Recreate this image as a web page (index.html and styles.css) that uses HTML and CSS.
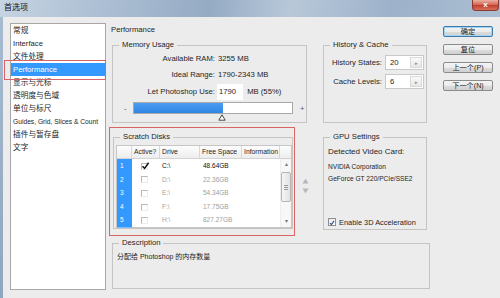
FILE: index.html
```html
<!DOCTYPE html>
<html lang="zh">
<head>
    <meta charset="UTF-8">
    <meta name="viewport" content="width=device-width, initial-scale=1.0">
    <title>首选项</title>
    <link rel="stylesheet" href="styles.css">
</head>
<body>
    <div class="window">
        <div class="titlebar">
            <span class="title">首选项</span>
            <div class="close-btn">x</div>
        </div>

        <div class="client">
            <!-- Left category list -->
            <ul class="nav">
                <li>常规</li>
                <li>Interface</li>
                <li>文件处理</li>
                <li class="active">Performance</li>
                <li>显示与光标</li>
                <li>透明度与色域</li>
                <li>单位与标尺</li>
                <li class="small">Guides, Grid, Slices &amp; Count</li>
                <li>插件与暂存盘</li>
                <li>文字</li>
            </ul>

            <div class="panel">
                <h1>Performance</h1>

                <div class="panel-row top-row">
                    <fieldset class="group memory">
                        <legend>Memory Usage</legend>
                        <div class="mem-grid">
                            <span class="label">Available RAM:</span><span>3255 MB</span>
                            <span class="label">Ideal Range:</span><span>1790-2343 MB</span>
                            <span class="label">Let Photoshop Use:</span>
                            <span class="use"><span class="field">1790</span> MB (55%)</span>
                        </div>
                        <div class="slider">
                            <span class="minus">-</span>
                            <div class="track">
                                <div class="fill" style="width: 89px"></div>
                                <svg class="thumb" width="8" height="7" viewBox="0 0 8 7"><polygon points="4,0.8 7.2,6.2 0.8,6.2" fill="#fff" stroke="#3b4a3b" stroke-width="1"/></svg>
                            </div>
                            <span class="plus">+</span>
                        </div>
                    </fieldset>

                    <fieldset class="group history">
                        <legend>History &amp; Cache</legend>
                        <div class="hist-grid">
                            <span class="label">History States:</span>
                            <div class="spin"><span>20</span><span class="spin-btn">&#9656;</span></div>
                            <span class="label">Cache Levels:</span>
                            <div class="spin"><span>6</span><span class="spin-btn">&#9656;</span></div>
                        </div>
                    </fieldset>
                </div>

                <div class="panel-row bottom-row">
                    <div class="callout">
                        <fieldset class="group scratch">
                            <legend>Scratch Disks</legend>
                            <div class="disk-table">
                                <div class="disk-head">
                                    <span></span>
                                    <span>Active?</span>
                                    <span>Drive</span>
                                    <span>Free Space</span>
                                    <span>Information</span>
                                    <span class="blank"></span>
                                </div>
                                <div class="disk-body">
                                    <div class="disk-rows">
                                        <div class="disk-row on">
                                            <span class="num">1</span>
                                            <span class="act"><span class="box"><svg width="9" height="8" viewBox="0 0 9 8"><path d="M1.5 4.2 L3.6 6.4 L7.6 0.8" fill="none" stroke="#111" stroke-width="1.5"/></svg></span></span>
                                            <span class="drv">C:\</span>
                                            <span class="free">48.64GB</span>
                                            <span></span>
                                        </div>
                                        <div class="disk-row">
                                            <span class="num">2</span>
                                            <span class="act"><span class="box"></span></span>
                                            <span class="drv">D:\</span>
                                            <span class="free">22.36GB</span>
                                            <span></span>
                                        </div>
                                        <div class="disk-row">
                                            <span class="num">3</span>
                                            <span class="act"><span class="box"></span></span>
                                            <span class="drv">E:\</span>
                                            <span class="free">54.34GB</span>
                                            <span></span>
                                        </div>
                                        <div class="disk-row">
                                            <span class="num">4</span>
                                            <span class="act"><span class="box"></span></span>
                                            <span class="drv">F:\</span>
                                            <span class="free">17.75GB</span>
                                            <span></span>
                                        </div>
                                        <div class="disk-row">
                                            <span class="num">5</span>
                                            <span class="act"><span class="box"></span></span>
                                            <span class="drv">H:\</span>
                                            <span class="free">827.27GB</span>
                                            <span></span>
                                        </div>
                                    </div>
                                    <div class="scrollbar">
                                        <span class="arrow">&#9652;</span>
                                        <div class="sb-thumb"><span class="grip"></span></div>
                                        <span class="arrow down">&#9662;</span>
                                    </div>
                                </div>
                            </div>
                        </fieldset>
                    </div>

                    <div class="order-arrows">
                        <svg width="7" height="6" viewBox="0 0 7 6"><polygon points="3.5,0.5 6.5,5.5 0.5,5.5" fill="#b2b8be"/></svg>
                        <svg width="7" height="6" viewBox="0 0 7 6"><polygon points="0.5,0.5 6.5,0.5 3.5,5.5" fill="#b2b8be"/></svg>
                    </div>

                    <fieldset class="group gpu">
                        <legend>GPU Settings</legend>
                        <div class="gpu-body">
                            <div class="gpu-title">Detected Video Card:</div>
                            <div class="gpu-card">NVIDIA Corporation</div>
                            <div class="gpu-card">GeForce GT 220/PCIe/SSE2</div>
                            <label class="check-row">
                                <span class="check"><svg width="8" height="8" viewBox="0 0 8 8"><path d="M1.3 4.2 L3.2 6.2 L6.8 1.2" fill="none" stroke="#2b4f9e" stroke-width="1.4"/></svg></span>
                                Enable 3D Acceleration
                            </label>
                        </div>
                    </fieldset>
                </div>

                <fieldset class="group description">
                    <legend>Description</legend>
                    <p>分配给 Photoshop 的内存数量</p>
                </fieldset>
            </div>

            <div class="buttons">
                <button class="btn default">确定</button>
                <button class="btn">复位</button>
                <button class="btn">上一个(P)</button>
                <button class="btn">下一个(N)</button>
            </div>
        </div>

        <!-- Red annotation around the selected category -->
        <div class="mark nav-mark"></div>
    </div>
</body>
</html>
```

FILE: styles.css
```css
* {
    margin: 0;
    padding: 0;
    box-sizing: border-box;
}

body {
    width: 500px;
    height: 298px;
    overflow: hidden;
    font-family: "Liberation Sans", "Noto Sans CJK SC", sans-serif;
    font-size: 7.7px;
    color: #1e1e1e;
}

.window {
    position: relative;
    width: 500px;
    height: 298px;
    display: flex;
    flex-direction: column;
    background: linear-gradient(180deg, #a9bcd1, #8fa6bf);
}

/* Title bar */
.titlebar {
    position: relative;
    height: 17px;
    flex-shrink: 0;
    background: linear-gradient(100deg, #c6d4e3 0%, #afc1d5 18%, #95abc4 42%, #b8c8d9 58%, #9db2ca 78%, #aabdd2 100%);
}

.title {
    display: block;
    padding-left: 4px;
    line-height: 16px;
    font-size: 8px;
    color: #111;
}

.close-btn {
    position: absolute;
    top: 0;
    right: 1px;
    width: 27px;
    height: 11px;
    border: 1px solid #8a3a30;
    border-top: 0;
    border-radius: 0 0 4px 4px;
    background: linear-gradient(180deg, #eab0a4 0%, #d66a58 45%, #c2412f 55%, #d8705c 100%);
    color: #fff;
    font-weight: bold;
    font-size: 8px;
    line-height: 10px;
    text-align: center;
}

/* Client area */
.client {
    flex: 1;
    margin-left: 3px;
    background-color: #ececec;
    display: flex;
    align-items: flex-start;
    padding: 6px 0 0 7px;
}

.nav {
    list-style: none;
    width: 96px;
    height: 267px;
    flex-shrink: 0;
    background-color: #fff;
    border: 1px solid #a7a7a7;
}

.nav li {
    height: 13px;
    line-height: 13px;
    padding-left: 2px;
    white-space: nowrap;
}

.nav li.active {
    background-color: #3399ff;
    color: #fff;
}

.nav li.small {
    font-size: 6.7px;
}

.panel {
    width: 321px;
    margin-left: 3px;
    flex-shrink: 0;
}

.panel h1 {
    font-size: 7.7px;
    font-weight: normal;
    line-height: 14px;
    margin-left: 2px;
}

.panel-row {
    display: flex;
    align-items: flex-start;
}

.top-row {
    margin-top: 3px;
}

.bottom-row {
    margin-top: 4px;
}

/* Group boxes */
.group {
    border: 1px solid #c4c4c4;
    min-width: 0;
}

.group legend {
    margin-left: 6px;
    padding: 0 3px;
    line-height: 10px;
}

.memory {
    margin-left: 3px;
    width: 195px;
    height: 83px;
}

.mem-grid {
    display: grid;
    grid-template-columns: 102px auto;
    grid-template-rows: 16px 17px 17px;
    column-gap: 3px;
    align-items: center;
}

.label {
    text-align: right;
    white-space: nowrap;
}

.field {
    display: inline-block;
    width: 26px;
    height: 16px;
    line-height: 16px;
    margin-left: -1px;
    margin-right: 2px;
    padding-left: 2px;
    background-color: #fff;
}

.slider {
    display: flex;
    align-items: center;
    height: 14px;
    margin-top: 1px;
    padding-left: 11px;
}

.minus,
.plus {
    width: 5px;
    color: #555;
}

.track {
    position: relative;
    width: 160px;
    height: 12px;
    margin-left: 4px;
    background-color: #fff;
    border: 1px solid #a9a9a9;
}

.fill {
    height: 100%;
    background: linear-gradient(180deg, #4b9cf0, #2f86e3);
}

.thumb {
    position: absolute;
    left: 84px;
    top: 11px;
}

.plus {
    margin-left: 7px;
}

.history {
    margin-left: 16px;
    width: 104px;
    height: 83px;
}

.hist-grid {
    display: grid;
    grid-template-columns: 58px 39px;
    grid-auto-rows: 15px;
    column-gap: 3px;
    row-gap: 4px;
    padding-top: 5px;
    align-items: center;
}

.spin {
    display: flex;
    align-items: center;
    justify-content: space-between;
    height: 15px;
    padding: 1px 1px 1px 4px;
    background-color: #fff;
    border: 1px solid #c9c9c9;
}

.spin-btn {
    width: 12px;
    height: 11px;
    line-height: 11px;
    text-align: center;
    font-size: 5px;
    color: #888;
    background: linear-gradient(180deg, #fafafa, #e6e6e6);
    border: 1px solid #dadada;
}

/* Scratch disks */
.callout {
    width: 186px;
    height: 109px;
    padding: 4px 1px 0 3px;
    border: 1px solid #d86464;
}

.scratch {
    width: 180px;
    height: 97px;
}

.disk-table {
    width: 176px;
    margin: 3px 0 0 2px;
    border: 1px solid #c6c6c6;
    background-color: #fff;
    font-size: 6.8px;
}

.disk-head,
.disk-row {
    display: grid;
    grid-template-columns: 15px 28px 40px 42px 38px;
}

.disk-head {
    grid-template-columns: 15px 28px 40px 42px 38px 11px;
    height: 13px;
    line-height: 12px;
    background: linear-gradient(180deg, #fdfdfd, #ededed);
    border-bottom: 1px solid #d3d3d3;
}

.disk-head span {
    padding-left: 2px;
    border-right: 1px solid #d8d8d8;
    white-space: nowrap;
}

.disk-head span.blank {
    border-right: 0;
}

.disk-body {
    display: flex;
    height: 68px;
}

.disk-rows {
    width: 163px;
}

.disk-row {
    height: 13.6px;
    line-height: 13.6px;
    color: #a0a0a0;
    font-size: 6.5px;
}

.disk-row.on {
    color: #111;
}

.disk-row .num {
    background-color: #3399ff;
    color: #fff;
    padding-left: 3px;
    border-bottom: 1px solid #7dbcff;
}

.act {
    display: flex;
    align-items: center;
    padding-left: 9px;
}

.box {
    position: relative;
    width: 7px;
    height: 7px;
    border-top: 1px solid #b9b9b9;
    border-left: 1px solid #b9b9b9;
    border-right: 1px solid #ececec;
    border-bottom: 1px solid #ececec;
}

.box svg {
    position: absolute;
    left: -1px;
    top: -2px;
}

.drv {
    padding-left: 2px;
}

.free {
    padding-left: 3px;
}

.scrollbar {
    width: 11px;
    display: flex;
    flex-direction: column;
    align-items: center;
    background-color: #f7f7f7;
    border-left: 1px solid #eee;
    color: #777;
    font-size: 6px;
}

.scrollbar .arrow {
    height: 11px;
    line-height: 11px;
}

.sb-thumb {
    display: flex;
    align-items: center;
    justify-content: center;
    width: 10px;
    height: 30px;
    margin-top: 2px;
    border: 1px solid #b5b5b5;
    border-radius: 2px;
    background: linear-gradient(90deg, #f6f6f6, #e2e2e2);
}

.grip {
    width: 4px;
    height: 5px;
    border-top: 1px solid #999;
    border-bottom: 1px solid #999;
    background: linear-gradient(180deg, transparent 1px, #999 1px, #999 2px, transparent 2px);
}

.scrollbar .down {
    margin-top: auto;
}

.order-arrows {
    display: flex;
    flex-direction: column;
    gap: 4px;
    margin: 51px 0 0 7px;
}

/* GPU */
.gpu {
    margin: 5px 0 0 14px;
    width: 104px;
    height: 98px;
}

.gpu-body {
    display: flex;
    flex-direction: column;
    height: 86px;
    padding-left: 4px;
}

.gpu-title {
    padding-top: 4px;
    line-height: 12px;
    font-size: 8px;
}

.gpu-title + .gpu-card {
    margin-top: 3px;
}

.gpu-card {
    line-height: 12px;
    font-size: 6.6px;
}

.check-row {
    display: flex;
    align-items: center;
    gap: 3px;
    margin-top: auto;
    height: 12px;
    font-size: 7.4px;
}

.check {
    width: 8px;
    height: 8px;
    border: 1px solid #8e8f8f;
    background: linear-gradient(135deg, #e9e9e9, #fff);
    display: flex;
}

/* Description */
.description {
    margin: 2px 0 0 3px;
    width: 318px;
    height: 51px;
}

.description p {
    padding: 3px 0 0 4px;
    line-height: 12px;
    font-size: 7px;
}

/* Dialog buttons */
.buttons {
    display: flex;
    flex-direction: column;
    gap: 7px;
    margin: 3px 0 0 13px;
}

.btn {
    width: 50px;
    height: 11px;
    font-family: "Liberation Sans", "Noto Sans CJK SC", sans-serif;
    font-size: 7.2px;
    line-height: 9px;
    color: #222;
    border: 1px solid #8b8b8b;
    border-radius: 2px;
    background: linear-gradient(180deg, #f4f4f4 0%, #ebebeb 50%, #dcdcdc 51%, #d0d0d0 100%);
}

.btn.default {
    border-color: #3d7bad;
    box-shadow: inset 0 0 0 1px #9fd6f5;
}

/* Annotation */
.mark {
    position: absolute;
    border: 1px solid #d86464;
}

.nav-mark {
    left: 4px;
    top: 60px;
    width: 102px;
    height: 20px;
}
```
